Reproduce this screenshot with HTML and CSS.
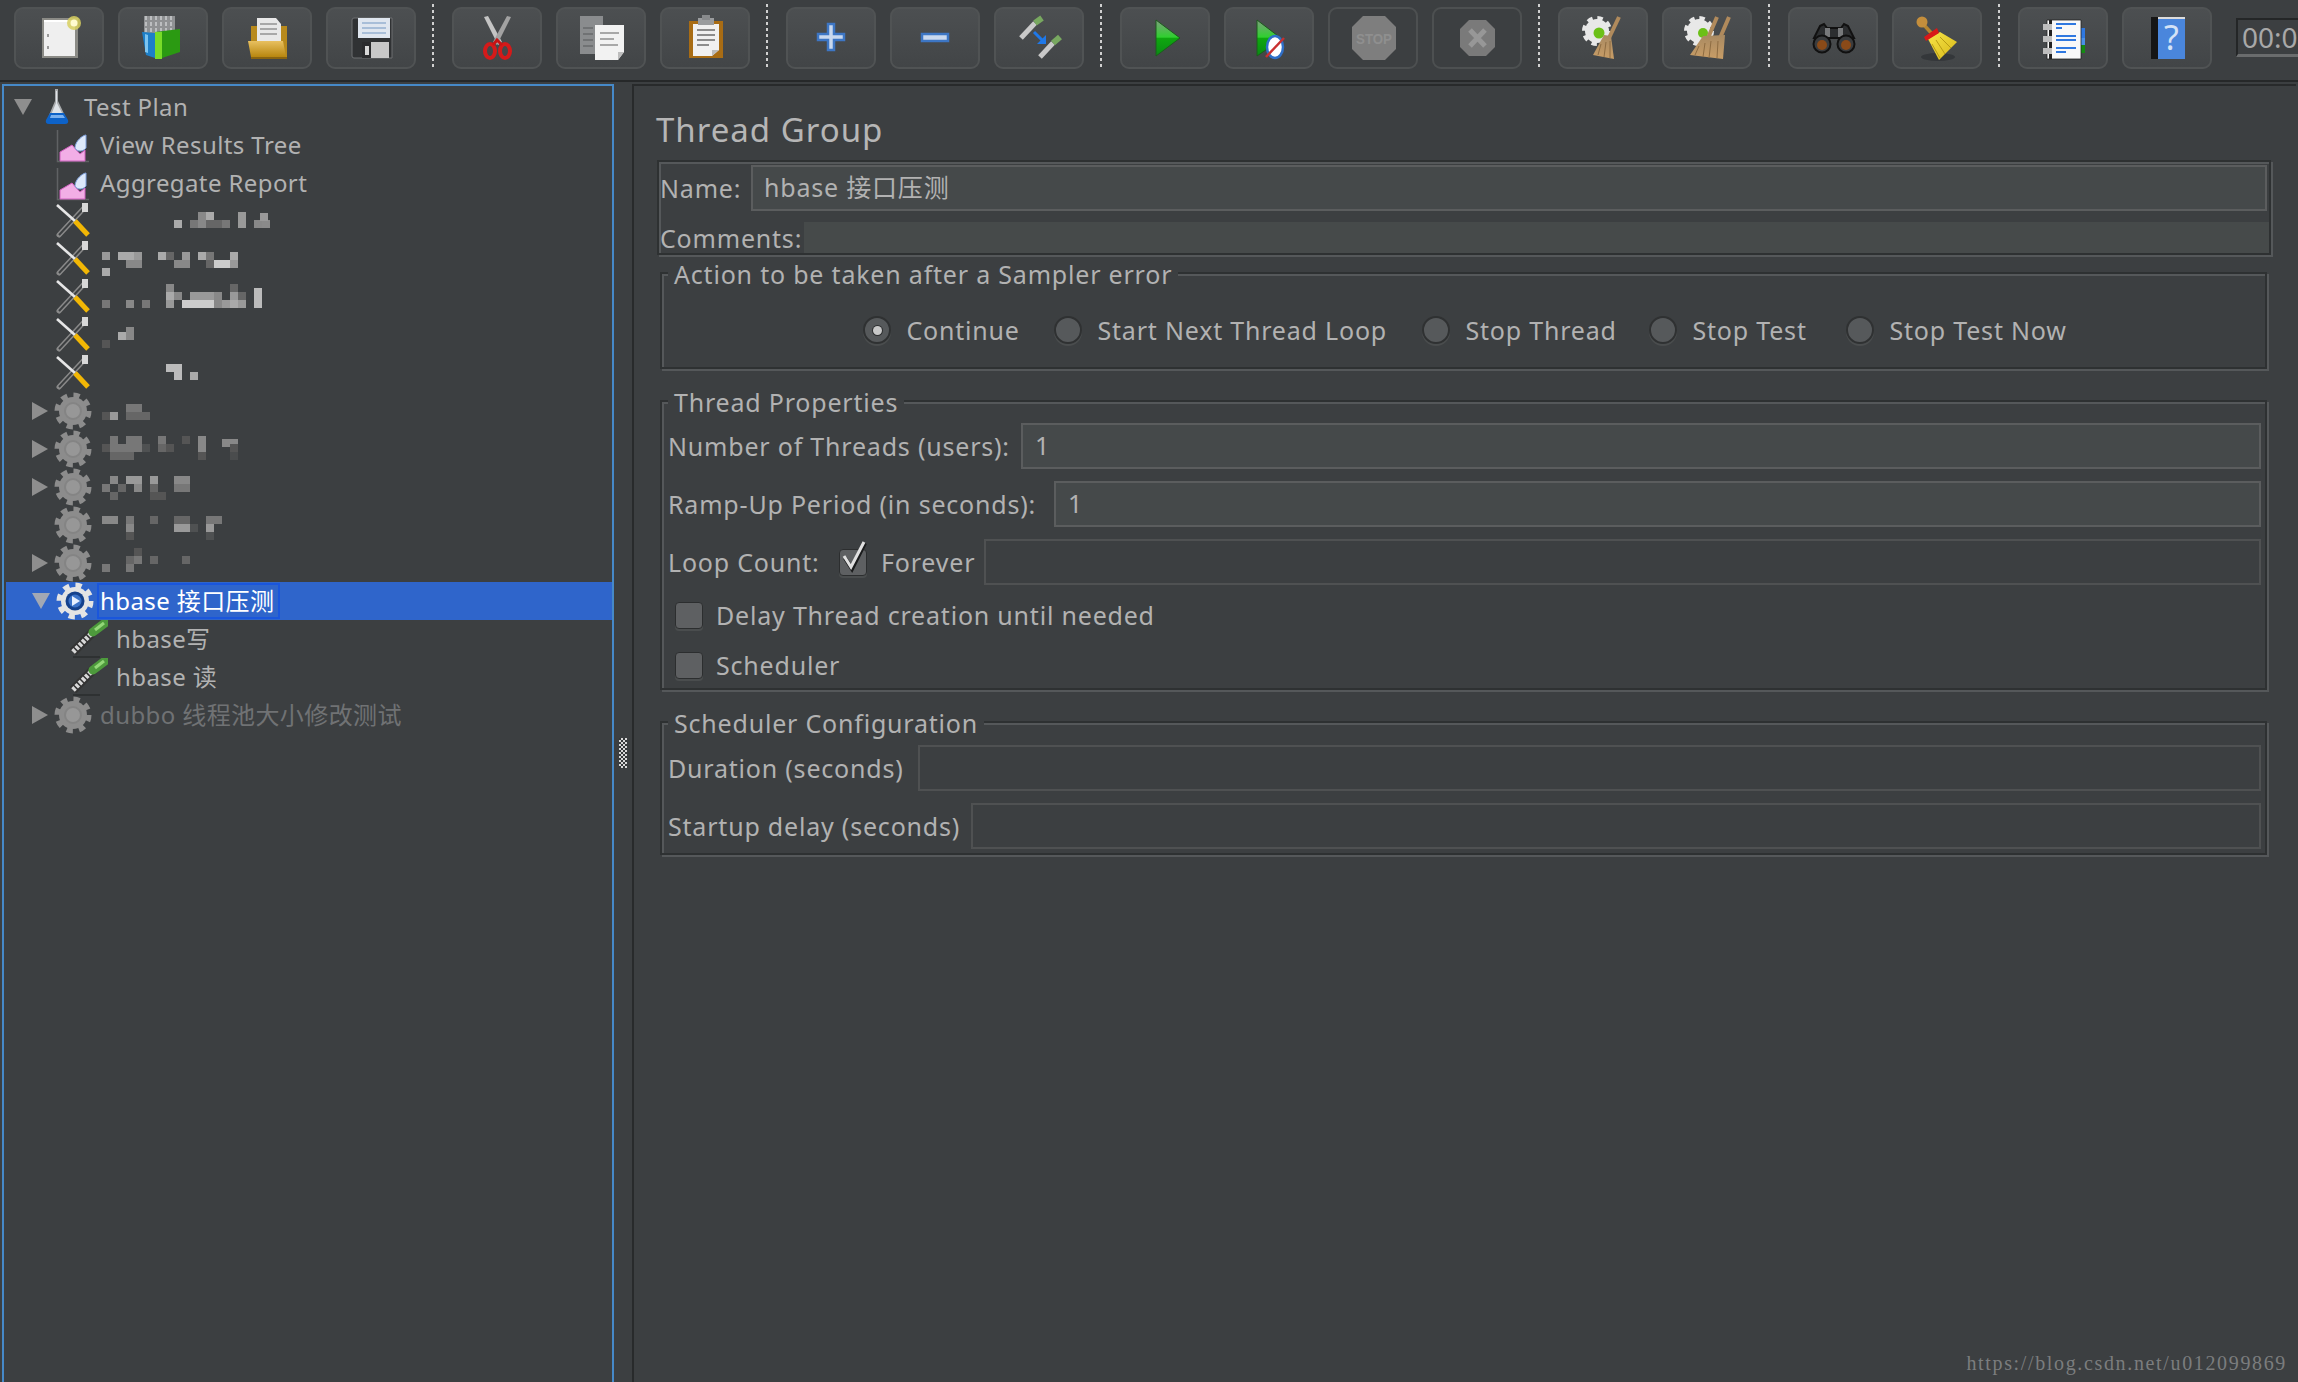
FILE: index.html
```html
<!DOCTYPE html>
<html lang="en">
<head>
<meta charset="utf-8">
<title>Thread Group</title>
<link rel="stylesheet" href="styles.css">
</head>
<body>
<svg class="defs" aria-hidden="true">
  <defs>
    <linearGradient id="runG" x1="0" y1="0" x2="0" y2="1"><stop offset="0" stop-color="#7f9f7f"/><stop offset=".48" stop-color="#2fd02f"/><stop offset=".5" stop-color="#0fa80f"/><stop offset="1" stop-color="#0a8a14"/></linearGradient>
    <linearGradient id="brushG" x1="0" y1="0" x2="0" y2="1"><stop offset="0" stop-color="#a98a62"/><stop offset="1" stop-color="#c89d66"/></linearGradient>
    <linearGradient id="yellowG" x1="0" y1="0" x2="1" y2="1"><stop offset="0" stop-color="#f6e448"/><stop offset="1" stop-color="#d8b818"/></linearGradient>
    <linearGradient id="folderG" x1="0" y1="0" x2="0" y2="1"><stop offset="0" stop-color="#e8c060"/><stop offset="1" stop-color="#b8860e"/></linearGradient>
    <symbol id="gear" viewBox="0 0 38 38">
      <circle cx="19" cy="19" r="15.5" fill="none" stroke="#8c8c8c" stroke-width="6" stroke-dasharray="6.1 6.07"/>
      <circle cx="19" cy="19" r="14" fill="#8c8c8c"/>
      <circle cx="19" cy="19" r="8" fill="#979797" stroke="#848484" stroke-width="2"/>
    </symbol>
    <symbol id="gearOn" viewBox="0 0 38 38">
      <circle cx="19" cy="19" r="15.5" fill="none" stroke="#e4e4e4" stroke-width="6" stroke-dasharray="6.1 6.07"/>
      <circle cx="19" cy="19" r="14" fill="#e4e4e4"/>
      <circle cx="19" cy="19" r="9.5" fill="#15418c"/>
      <circle cx="19" cy="19" r="6.5" fill="#3c73c8"/>
      <path d="M16 14l8 5-8 5z" fill="#e8f0ff"/>
    </symbol>
    <symbol id="tool" viewBox="0 0 34 38">
      <path d="M29 5L3 33" stroke="#8a8a8a" stroke-width="5" stroke-linecap="round"/>
      <path d="M29 5L3 33" stroke="#3c3f41" stroke-width="2"/>
      <path d="M26 1h6v9h-6z" fill="#d8d8d8"/>
      <path d="M1 3L19 19" stroke="#e6e6e6" stroke-width="2.6"/>
      <path d="M19 19L32 33" stroke="#f2b705" stroke-width="5"/>
    </symbol>
    <symbol id="graph" viewBox="0 0 34 38">
      <path d="M1.500 4V35.500H33" fill="none" stroke="#5f6264" stroke-width="1.500"/>
      <path d="M4 35V26L16 19L24 28L29 24V35z" fill="#f2aee6" stroke="#d060c0" stroke-width="1"/>
      <path d="M19 22C19 15 27 9 30 9V22C27 26 21 26 19 22z" fill="#dde9fb" stroke="#7ea0dc" stroke-width="1"/>
    </symbol>
    <symbol id="flask" viewBox="0 0 24 38">
      <path d="M10 1h3v12l9 19q1 3-2 3H4q-3 0-2-3l8-19z" fill="#a8aaac"/>
      <path d="M11 3h1v12l6 12H6l5-12z" fill="#dfe3e8"/>
      <path d="M5 25H19L23 32q1 4-3 4H4q-4 0-3-4z" fill="#0d62c8"/>
      <path d="M6 27h12l2 3H5z" fill="#7ab0ee"/>
    </symbol>
    <symbol id="pencil" viewBox="0 0 38 38">
      <path d="M3 32L25 10" stroke="#333" stroke-width="9"/>
      <path d="M3 32L25 10" stroke="#d8d8d8" stroke-width="5" stroke-dasharray="3 1.500"/>
      <path d="M23 12L35 3" stroke="#4d9a3c" stroke-width="9" stroke-linecap="round"/>
      <path d="M25 10L34 3" stroke="#93d878" stroke-width="3"/>
      <path d="M3 37H30" stroke="#2e3132" stroke-width="2"/>
    </symbol>
  </defs>
</svg>

<div class="app">
  <header class="toolbar">
    <div class="tb"><svg class="ico" viewBox="0 0 60 60"><rect x="13" y="10" width="36" height="40" fill="#8b8b86"/><rect x="15" y="12" width="31" height="36" fill="#efefef"/><rect x="15" y="12" width="31" height="2" fill="#fff"/><rect x="18" y="26" width="2" height="3" fill="#999"/><rect x="18" y="38" width="2" height="3" fill="#999"/><circle cx="45" cy="15" r="7" fill="#d8d060" opacity=".85"/><circle cx="45" cy="15" r="3.500" fill="#fffbd0"/></svg></div>
    <div class="tb"><svg class="ico" viewBox="0 0 60 60"><path d="M11 8h31v20H11z" fill="#8f9193"/><path d="M13 8v18M18 8v18M23 8v18M28 8v18M33 8v18M38 8v18" stroke="#bcbec0" stroke-width="2" stroke-dasharray="4 2"/><path d="M9 24l13 1v25l-9-3z" fill="#1d7fc8"/><path d="M12 26l3 1v18l-3-1z" fill="#7cc4f0"/><path d="M22 24l25-3v23l-21 7h-4z" fill="#2b9a12"/><path d="M22 24h7v27h-7z" fill="#78dc28"/></svg></div>
    <div class="tb"><svg class="ico" viewBox="0 0 60 60"><path d="M14 18h36v32H14z" fill="#b88a1c"/><path d="M20 10h19l5 6v20H20z" fill="#e8e8e8"/><path d="M23 16h17M23 21h17M23 26h17" stroke="#a8a8a8" stroke-width="2"/><path d="M11 33h35l3 16H14z" fill="url(#folderG)"/><path d="M14 50h36" stroke="#8a6410" stroke-width="2"/></svg></div>
    <div class="tb"><svg class="ico" viewBox="0 0 60 60"><path d="M11 12q0-2 2-2h38v40H13q-2 0-2-2z" fill="#303234" stroke="#6c6e70" stroke-width="1"/><path d="M17 10h32v20H17z" fill="#dfe6ef"/><path d="M21 15h24M21 20h24M21 25h24" stroke="#a8bed8" stroke-width="2"/><path d="M21 34h27v16H21z" fill="#c8c8c8"/><path d="M21 34h9v16h-9z" fill="#2b2c2e"/><path d="M24 38h4v9h-4z" fill="#d8d8d8"/></svg></div>
    <span class="sep"></span>
    <div class="tb"><svg class="ico" viewBox="0 0 60 60"><path d="M17 9L21 8L35 34L31 37z" fill="#c4c4c4"/><path d="M44 9L40 8L26 34L30 37z" fill="#a2a2a2"/><ellipse cx="23" cy="43" rx="5" ry="7" fill="none" stroke="#d41a1a" stroke-width="4"/><ellipse cx="38" cy="43" rx="5" ry="7" fill="none" stroke="#d41a1a" stroke-width="4"/><path d="M26 37l4-5 5 5" stroke="#c81414" stroke-width="3" fill="none"/></svg></div>
    <div class="tb"><svg class="ico" viewBox="0 0 60 60"><path d="M9 8h23v38H9z" fill="#8a8c8e"/><path d="M12 20h10M12 26h10M12 32h10M12 38h10" stroke="#707274" stroke-width="2"/><path d="M24 17h29v27l-6 8H24z" fill="#f2f2f2"/><path d="M29 25h19M29 31h14M29 37h18" stroke="#a8a8a8" stroke-width="2"/><path d="M47 44h6l-6 8z" fill="#bdbdbd"/></svg></div>
    <div class="tb"><svg class="ico" viewBox="0 0 60 60"><path d="M14 13h34v37H14z" fill="#a86c14"/><path d="M18 16h26v26l-7 6H18z" fill="#f0f0f0"/><path d="M23 10h16v7H23z" fill="#9a9c9e"/><path d="M27 7h8v5h-8z" fill="#888a8c"/><path d="M22 22h18M22 27h18M22 32h18M22 37h12" stroke="#8c8c8c" stroke-width="2"/><path d="M37 48l7-6h-7z" fill="#bbb"/></svg></div>
    <span class="sep"></span>
    <div class="tb"><svg class="ico" viewBox="0 0 60 60"><path d="M27 16h6v10h10v6H33v10h-6V32H17v-6h10z" fill="#c9d8ee" stroke="#3d76c4" stroke-width="2.500"/></svg></div>
    <div class="tb"><svg class="ico" viewBox="0 0 60 60"><rect x="17" y="26" width="26" height="7" fill="#c9d8ee" stroke="#3d76c4" stroke-width="2.500"/></svg></div>
    <div class="tb"><svg class="ico" viewBox="0 0 60 60"><path d="M12 30L26 15" stroke="#c9c9c9" stroke-width="5"/><path d="M26 15L33 10" stroke="#78a860" stroke-width="6"/><path d="M31 49L44 35" stroke="#c9c9c9" stroke-width="5"/><path d="M44 35L51 29" stroke="#78a860" stroke-width="6"/><path d="M25 24L34 33" stroke="#1f78e8" stroke-width="3"/><path d="M37 27v9h-9z" fill="#1f78e8"/></svg></div>
    <span class="sep"></span>
    <div class="tb"><svg class="ico" viewBox="0 0 60 60"><path d="M21 12L45 30L21 48z" fill="url(#runG)" stroke="#1c5c1c" stroke-width="1"/></svg></div>
    <div class="tb"><svg class="ico" viewBox="0 0 60 60"><path d="M18 12L43 31L18 48z" fill="url(#runG)" stroke="#1c5c1c" stroke-width="1"/><ellipse cx="36" cy="39" rx="8" ry="11" fill="#fff" stroke="#2f6fc8" stroke-width="2.500"/><path d="M27 49L45 30" stroke="#c83030" stroke-width="2.500"/></svg></div>
    <div class="tb off"><svg class="ico" viewBox="0 0 60 60"><path d="M20 8h22l11 11v22L42 52H20L9 41V19z" fill="#7e7e7e"/><text class="stoptext" x="31" y="36" text-anchor="middle" textLength="36" lengthAdjust="spacingAndGlyphs">STOP</text></svg></div>
    <div class="tb off"><svg class="ico" viewBox="0 0 60 60"><path d="M22 12h17l9 9v18l-9 9H22l-9-9V21z" fill="#7a7a7a"/><path d="M23 22L38 38M38 22L23 38" stroke="#979797" stroke-width="5"/></svg></div>
    <span class="sep"></span>
    <div class="tb"><svg class="ico" viewBox="0 0 60 60"><circle cx="24" cy="23" r="12" fill="none" stroke="#e8e8e8" stroke-width="6" stroke-dasharray="5 4.420"/><circle cx="24" cy="23" r="12" fill="#e8e8e8"/><circle cx="26" cy="25" r="5.500" fill="#6cc018"/><path d="M46 9L36 30" stroke="#b08a5c" stroke-width="4"/><path d="M31 27L38 28L41 51L20 47z" fill="url(#brushG)"/><path d="M28 36L25 47M33 34L31 49M37 33L37 50" stroke="#8e6c42" stroke-width="1"/></svg></div>
    <div class="tb"><svg class="ico" viewBox="0 0 60 60"><circle cx="22" cy="23" r="12" fill="none" stroke="#e8e8e8" stroke-width="6" stroke-dasharray="5 4.420"/><circle cx="22" cy="23" r="12" fill="#e8e8e8"/><circle cx="26" cy="25" r="5" fill="#6cc018"/><path d="M40 9L31 30M52 9L43 30" stroke="#b08a5c" stroke-width="4"/><path d="M26 28L48 27L46 51L13 47z" fill="url(#brushG)"/><path d="M22 38L18 47M28 35L26 49M34 33L32 50M41 33L40 50" stroke="#8e6c42" stroke-width="1"/></svg></div>
    <span class="sep"></span>
    <div class="tb"><svg class="ico" viewBox="0 0 60 60"><path d="M17 18l4-2 3 4h14l3-4 4 2 6 12H11z" fill="#2c2e30" stroke="#111" stroke-width="2"/><path d="M22 20h5v9h-5zM35 20h5v9h-5z" fill="#77797b"/><circle cx="19" cy="36" r="8.500" fill="#3a3c3e" stroke="#111" stroke-width="2"/><circle cx="43" cy="36" r="8.500" fill="#3a3c3e" stroke="#111" stroke-width="2"/><circle cx="19" cy="37" r="5" fill="#8a4a18"/><circle cx="43" cy="37" r="5" fill="#8a4a18"/></svg></div>
    <div class="tb"><svg class="ico" viewBox="0 0 60 60"><ellipse cx="31" cy="49" rx="17" ry="4" fill="#34373a"/><path d="M17 17L27 28" stroke="#b48430" stroke-width="3.500"/><circle cx="15" cy="14" r="5.500" fill="#c48e3c"/><path d="M21 31L33 24L50 34L32 52z" fill="url(#yellowG)"/><path d="M25 36L33 50M29 32L38 46M33 29L44 40" stroke="#b89c14" stroke-width="1"/><path d="M17 29L30 20L32 25L19 33z" fill="#d81818"/></svg></div>
    <span class="sep"></span>
    <div class="tb"><svg class="ico" viewBox="0 0 60 60"><path d="M47 20h5v10h-5z" fill="#2f78e0"/><path d="M47 30h5v7h-5z" fill="#4a90e8"/><path d="M47 37h5v8h-5z" fill="#138a13"/><path d="M14 12h34v39H14z" fill="#f8f8f8" stroke="#222" stroke-width=".8"/><path d="M16 12h3v39h-3z" fill="#222"/><path d="M10 16h9v6h-9zM10 28h9v6h-9zM10 40h9v6h-9z" fill="#bdbdbd"/><path d="M23 16h20M23 20h6M23 28h20M23 32h20M23 40h20M23 44h10" stroke="#2f78e0" stroke-width="2"/></svg></div>
    <div class="tb"><svg class="ico" viewBox="0 0 60 60"><path d="M14 9h8v42h-8z" fill="#151515"/><path d="M21 9h27v2H21z" fill="#dcdcdc"/><path d="M21 11h27v40H21z" fill="#4a86dc"/><text class="helptext" x="34.500" y="42" text-anchor="middle">?</text></svg></div>
    <div class="timer">00:0</div>
  </header>

  <main class="workspace">
    <nav class="tree">
      <div class="row root"><span class="twisty open"></span><svg class="i-flask"><use href="#flask"/></svg><span class="label">Test Plan</span></div>
      <div class="row child"><svg class="i-small"><use href="#graph"/></svg><span class="label">View Results Tree</span></div>
      <div class="row child"><svg class="i-small"><use href="#graph"/></svg><span class="label">Aggregate Report</span></div>

      <div class="row child"><svg class="i-small"><use href="#tool"/></svg><svg class="mosaic"><rect x="74" y="18" fill="#aaa"/><rect x="90" y="18" fill="#777"/><rect x="98" y="10" fill="#888"/><rect x="98" y="18" fill="#888"/><rect x="106" y="10" fill="#aaa"/><rect x="106" y="18" fill="#666"/><rect x="114" y="18" fill="#666"/><rect x="122" y="18" fill="#777"/><rect x="138" y="10" fill="#999"/><rect x="138" y="18" fill="#999"/><rect x="154" y="18" fill="#888"/><rect x="162" y="18" fill="#8a8a8a"/><rect x="160" y="11" fill="#999"/></svg></div>
      <div class="row child"><svg class="i-small"><use href="#tool"/></svg><svg class="mosaic"><rect x="2" y="12" fill="#999"/><rect x="18" y="12" fill="#aaa"/><rect x="26" y="12" fill="#aaa"/><rect x="26" y="20" fill="#888"/><rect x="34" y="20" fill="#888"/><rect x="34" y="12" fill="#999"/><rect x="58" y="12" fill="#aaa"/><rect x="66" y="12" fill="#666"/><rect x="74" y="20" fill="#888"/><rect x="82" y="12" fill="#999"/><rect x="82" y="20" fill="#888"/><rect x="98" y="12" fill="#aaa"/><rect x="106" y="12" fill="#777"/><rect x="106" y="20" fill="#666"/><rect x="114" y="20" fill="#ccc"/><rect x="122" y="20" fill="#ccc"/><rect x="130" y="12" fill="#aaa"/><rect x="130" y="20" fill="#999"/><rect x="2" y="28" fill="#aaa"/></svg></div>
      <div class="row child"><svg class="i-small"><use href="#tool"/></svg><svg class="mosaic"><rect x="2" y="22" fill="#777"/><rect x="26" y="22" fill="#888"/><rect x="42" y="22" fill="#777"/><rect x="66" y="6" fill="#888"/><rect x="66" y="14" fill="#aaa"/><rect x="66" y="22" fill="#999"/><rect x="74" y="14" fill="#888"/><rect x="82" y="22" fill="#ccc"/><rect x="90" y="22" fill="#ccc"/><rect x="98" y="22" fill="#ccc"/><rect x="106" y="22" fill="#ccc"/><rect x="90" y="14" fill="#999"/><rect x="98" y="14" fill="#999"/><rect x="106" y="14" fill="#999"/><rect x="114" y="14" fill="#888"/><rect x="114" y="22" fill="#888"/><rect x="122" y="22" fill="#999"/><rect x="130" y="6" fill="#666"/><rect x="130" y="14" fill="#999"/><rect x="130" y="22" fill="#aaa"/><rect x="138" y="14" fill="#666"/><rect x="138" y="22" fill="#999"/><rect x="154" y="10" fill="#bbb"/><rect x="154" y="14" fill="#bbb"/><rect x="154" y="22" fill="#bbb"/></svg></div>
      <div class="row child"><svg class="i-small"><use href="#tool"/></svg><svg class="mosaic"><rect x="18" y="16" fill="#aaa"/><rect x="26" y="16" fill="#888"/><rect x="26" y="11" fill="#888"/><rect x="2" y="24" fill="#555"/></svg></div>
      <div class="row child"><svg class="i-small"><use href="#tool"/></svg><svg class="mosaic"><rect x="66" y="10" fill="#bbb"/><rect x="74" y="10" fill="#bbb"/><rect x="74" y="18" fill="#bbb"/><rect x="90" y="18" fill="#aaa"/></svg></div>

      <div class="row group"><span class="twisty"></span><svg class="i-gear"><use href="#gear"/></svg><svg class="mosaic"><rect x="26" y="12" fill="#777"/><rect x="34" y="12" fill="#777"/><rect x="26" y="20" fill="#666"/><rect x="34" y="20" fill="#666"/><rect x="10" y="20" fill="#999"/><rect x="2" y="20" fill="#555"/><rect x="42" y="20" fill="#666"/></svg></div>
      <div class="row group"><span class="twisty"></span><svg class="i-gear"><use href="#gear"/></svg><svg class="mosaic"><rect x="10" y="6" fill="#777"/><rect x="26" y="6" fill="#777"/><rect x="34" y="6" fill="#777"/><rect x="2" y="14" fill="#555"/><rect x="10" y="14" fill="#777"/><rect x="18" y="14" fill="#777"/><rect x="26" y="14" fill="#777"/><rect x="34" y="14" fill="#777"/><rect x="42" y="14" fill="#4f5152"/><rect x="58" y="6" fill="#777"/><rect x="58" y="14" fill="#666"/><rect x="66" y="14" fill="#555"/><rect x="82" y="6" fill="#555"/><rect x="98" y="6" fill="#888"/><rect x="98" y="14" fill="#888"/><rect x="98" y="22" fill="#555"/><rect x="122" y="9" fill="#888"/><rect x="130" y="9" fill="#888"/><rect x="130" y="14" fill="#555"/><rect x="130" y="22" fill="#4a4c4d"/><rect x="10" y="22" fill="#666"/><rect x="18" y="22" fill="#666"/><rect x="26" y="22" fill="#666"/></svg></div>
      <div class="row group"><span class="twisty"></span><svg class="i-gear"><use href="#gear"/></svg><svg class="mosaic"><rect x="10" y="8" fill="#888"/><rect x="26" y="8" fill="#999"/><rect x="34" y="8" fill="#999"/><rect x="34" y="16" fill="#888"/><rect x="2" y="16" fill="#777"/><rect x="18" y="16" fill="#666"/><rect x="10" y="24" fill="#666"/><rect x="50" y="8" fill="#999"/><rect x="50" y="16" fill="#666"/><rect x="50" y="24" fill="#555"/><rect x="58" y="24" fill="#555"/><rect x="74" y="8" fill="#888"/><rect x="82" y="8" fill="#888"/><rect x="74" y="16" fill="#777"/><rect x="82" y="16" fill="#777"/></svg></div>
      <div class="row group"><span class="twisty none"></span><svg class="i-gear"><use href="#gear"/></svg><svg class="mosaic"><rect x="2" y="10" fill="#888"/><rect x="10" y="10" fill="#888"/><rect x="26" y="10" fill="#777"/><rect x="26" y="18" fill="#888"/><rect x="26" y="26" fill="#555"/><rect x="50" y="10" fill="#666"/><rect x="74" y="10" fill="#666"/><rect x="82" y="10" fill="#666"/><rect x="74" y="18" fill="#999"/><rect x="82" y="18" fill="#999"/><rect x="90" y="18" fill="#4f5152"/><rect x="106" y="10" fill="#777"/><rect x="114" y="10" fill="#777"/><rect x="106" y="18" fill="#999"/><rect x="106" y="26" fill="#4f5152"/></svg></div>
      <div class="row group"><span class="twisty"></span><svg class="i-gear"><use href="#gear"/></svg><svg class="mosaic"><rect x="34" y="4" fill="#555"/><rect x="26" y="12" fill="#666"/><rect x="34" y="12" fill="#777"/><rect x="50" y="12" fill="#666"/><rect x="82" y="12" fill="#666"/><rect x="26" y="20" fill="#777"/><rect x="2" y="20" fill="#777"/></svg></div>

      <div class="row group selected"><span class="twisty open"></span><svg class="i-gear"><use href="#gearOn"/></svg><span class="label focus">hbase 接口压测</span></div>
      <div class="row leaf"><svg class="i-gear"><use href="#pencil"/></svg><span class="label">hbase写</span></div>
      <div class="row leaf"><svg class="i-gear"><use href="#pencil"/></svg><span class="label">hbase 读</span></div>
      <div class="row group dim"><span class="twisty"></span><svg class="i-gear"><use href="#gear"/></svg><span class="label">dubbo 线程池大小修改测试</span></div>
    </nav>

    <div class="splitter"><span class="grip"></span></div>

    <section class="panel">
      <h1 class="title">Thread Group</h1>

      <div class="names">
        <div class="name-row">
          <span class="w-name">Name:</span>
          <div class="field on strong">hbase 接口压测</div>
        </div>
        <div class="comment-row">
          <span class="w-comments">Comments:</span>
          <div class="comment-box"></div>
        </div>
      </div>

      <div class="box action">
        <div class="legend">Action to be taken after a Sampler error</div>
        <div class="radios">
          <div class="radio-item"><span class="radio checked"></span><span>Continue</span></div>
          <div class="radio-item"><span class="radio"></span><span>Start Next Thread Loop</span></div>
          <div class="radio-item"><span class="radio"></span><span>Stop Thread</span></div>
          <div class="radio-item"><span class="radio"></span><span>Stop Test</span></div>
          <div class="radio-item"><span class="radio"></span><span>Stop Test Now</span></div>
        </div>
      </div>

      <div class="box props">
        <div class="legend">Thread Properties</div>
        <div class="form-row first"><span class="w-threads">Number of Threads (users):</span><div class="field on">1</div></div>
        <div class="form-row"><span class="w-ramp">Ramp-Up Period (in seconds):</span><div class="field on">1</div></div>
        <div class="form-row">
          <span class="w-loop">Loop Count:</span>
          <span class="check checked"><svg class="tick" viewBox="0 0 32 36"><path d="M8 17l7 11L28 2" fill="none" stroke="#1b1c1d" stroke-width="4"/><path d="M7 15l7 11L27 1" fill="none" stroke="#e0e0e0" stroke-width="3"/></svg></span>
          <span class="w-forever">Forever</span>
          <div class="field"></div>
        </div>
        <div class="check-row delay"><span class="check"></span><span>Delay Thread creation until needed</span></div>
        <div class="check-row sched"><span class="check"></span><span>Scheduler</span></div>
      </div>

      <div class="box config">
        <div class="legend">Scheduler Configuration</div>
        <div class="form-row first"><span class="w-duration">Duration (seconds)</span><div class="field"></div></div>
        <div class="form-row"><span class="w-startup">Startup delay (seconds)</span><div class="field"></div></div>
      </div>
    </section>
  </main>
  <div class="watermark">https://blog.csdn.net/u012099869</div>
</div>
</body>
</html>
```

FILE: styles.css
```css
* { box-sizing: border-box; }
html, body { margin: 0; height: 100%; overflow: hidden; background: #3c3f41; }
body { font: 25px/30px "Noto Sans", "Noto Sans CJK SC", sans-serif; color: #b2b2b2; }
.defs { position: absolute; width: 0; height: 0; }

.app { display: flex; flex-direction: column; height: 1382px; position: relative; }

/* toolbar */
.toolbar { display: flex; align-items: flex-start; height: 82px; padding: 7px 0 0 14px; gap: 14px; border-bottom: 2px solid #262829; overflow: hidden; flex: none; }
.tb { flex: none; width: 90px; height: 62px; border: 2px solid #505354; border-radius: 9px; background: linear-gradient(#4c4f51, #424547); display: flex; align-items: center; justify-content: center; }
.tb.off { background: #3c3f41; border-color: #4d5051; }
.ico { width: 60px; height: 60px; flex: none; }
.sep { flex: none; width: 2px; height: 64px; margin: -3px 4px 0 2px; background: repeating-linear-gradient(#d0d0d0 0 3px, transparent 3px 6px); }
.stoptext { font: 700 15px "Liberation Sans", sans-serif; fill: #8f8f8f; }
.helptext { font: 34px "Noto Sans", sans-serif; fill: #d4e2f6; }
.timer { flex: none; width: 62px; height: 39px; margin: 11px 0 0 10px; padding-left: 4px; border: 2px solid #242627; border-right: 0; border-bottom: 3px solid #6a6c6d; font-size: 28px; line-height: 34px; color: #a8a8a8; }

/* workspace */
.workspace { flex: 1; display: flex; margin-top: 2px; min-height: 0; }

.tree { flex: none; width: 612px; margin-left: 2px; border: 2px solid #4689c8; border-bottom: 0; padding: 2px 0 0; }
.row { display: flex; align-items: center; height: 38px; margin-left: 2px; white-space: nowrap; letter-spacing: .4px; font-size: 24px; }
.root { padding-left: 8px; }
.root .twisty { margin-right: 13px; width: 18px; }
.root .i-flask { margin-right: 15px; }
.child { padding-left: 50px; }
.child .i-small { margin-right: 10px; }
.group { padding-left: 26px; }
.group .twisty { margin-right: 6px; }
.group .i-gear { margin-right: 8px; }
.leaf { padding-left: 64px; }
.leaf .i-gear { margin-right: 8px; }

.twisty { flex: none; width: 16px; height: 18px; background: #8e8e8e; clip-path: polygon(0 0, 100% 50%, 0 100%); }
.twisty.open { width: 18px; height: 16px; clip-path: polygon(0 0, 100% 0, 50% 100%); }
.twisty.none { background: none; }
.i-flask { flex: none; width: 24px; height: 38px; }
.i-small { flex: none; width: 34px; height: 38px; }
.i-gear { flex: none; width: 38px; height: 38px; }
.mosaic { flex: none; width: 200px; height: 38px; }
.mosaic rect { width: 8px; height: 8px; }
.selected { background: #2f65cb; color: #fff; }
.selected .twisty { background: #a2a8b4; }
.selected .twisty.open { margin-right: 6px; }
.selected .i-gear { margin-right: 6px; }
.focus { border: 2px solid #1a56dc; height: 36px; line-height: 32px; margin-left: -3px; padding: 0 4px 0 1px; }
.dim { color: #707274; }

.splitter { flex: none; width: 18px; display: flex; align-items: center; justify-content: center; padding-top: 40px; }
.grip { width: 8px; height: 30px; background: repeating-conic-gradient(#d8d8d8 0 25%, #35383a 0 50%) 0 0 / 4px 4px; }

/* right panel */
.panel { flex: 1; min-width: 0; margin-right: 2px; border-left: 2px solid #282a2b; border-top: 2px solid #282a2b; padding: 20px 25px 0 22px; position: relative; letter-spacing: .8px; }
.title { margin: 0 0 6px; font-size: 33px; line-height: 48px; font-weight: 400; letter-spacing: 1px; color: #b6b6b6; }

.names { margin-left: 1px; height: 95px; border: 2px solid #2e3132; box-shadow: inset 2px 2px 0 #55585a, 2px 2px 0 #55585a; padding: 3px 0 0 1px; }
.name-row { display: flex; align-items: center; height: 46px; }
.w-name { flex: none; width: 91px; }
.comment-row { display: flex; align-items: center; height: 31px; margin-top: 11px; }
.w-comments { flex: none; width: 144px; }
.comment-box { flex: 1; height: 31px; background: #464a4a; }

.field { flex: 1; height: 46px; border: 2px solid #4f5152; padding: 0 12px; line-height: 40px; min-width: 0; }
.field.on { background: #45494a; border-color: #5b5d5e; }
.field.strong { margin-right: 2px; padding: 0 11px; }

.box { margin: 0 4px; border: 2px solid #2e3132; box-shadow: inset 2px 2px 0 #55585a, 2px 2px 0 #55585a; }
.action { margin-top: 17px; height: 97px; }
.props { margin-top: 31px; height: 290px; padding: 0 4px 0 6px; }
.config { margin-top: 31px; height: 134px; padding: 0 4px 0 6px; }
.legend { width: fit-content; height: 30px; margin: -15px 0 0 6px; padding: 0 6px; background: #3c3f41; }
.props .legend, .config .legend { margin-left: 0; }

.radios { display: grid; grid-template-columns: 191px 368px 227px 197px auto; margin: 26px 0 0 201px; }
.radio-item { display: flex; align-items: center; gap: 15.5px; height: 30px; }
.radio { flex: none; width: 28px; height: 28px; border-radius: 50%; background: #56595b; border: 2px solid #2f3132; box-shadow: 0 2px 0 #4a4d4e; display: flex; align-items: center; justify-content: center; }
.radio.checked::after { content: ""; width: 9px; height: 9px; border-radius: 50%; background: #c8c8c8; box-shadow: 0 0 0 1px #2d2f30; }

.form-row { display: flex; align-items: center; margin-top: 12px; }
.form-row.first { margin-top: 6px; }
.config .form-row.first { margin-top: 7px; }
.w-threads { flex: none; width: 353px; }
.w-ramp { flex: none; width: 386px; }
.w-duration { flex: none; width: 250px; }
.w-startup { flex: none; width: 303px; }
.w-loop { flex: none; width: 171px; }
.w-forever { flex: none; width: 103px; margin-left: 14px; }

.check { flex: none; width: 28px; height: 27px; border-radius: 4px; background: #5e6062; border: 1px solid #2c2e2f; box-shadow: 0 2px 0 #4a4d4e; position: relative; display: block; }
.tick { position: absolute; left: -3px; top: -9px; width: 32px; height: 36px; }
.check-row { display: flex; align-items: center; gap: 13px; height: 32px; padding-left: 7px; }
.delay { margin-top: 14px; }
.sched { margin-top: 18px; }

.watermark { position: absolute; right: 11px; bottom: 7px; font: 20px/24px "Liberation Serif", serif; letter-spacing: 1.650px; color: #7b7d7e; }
```
